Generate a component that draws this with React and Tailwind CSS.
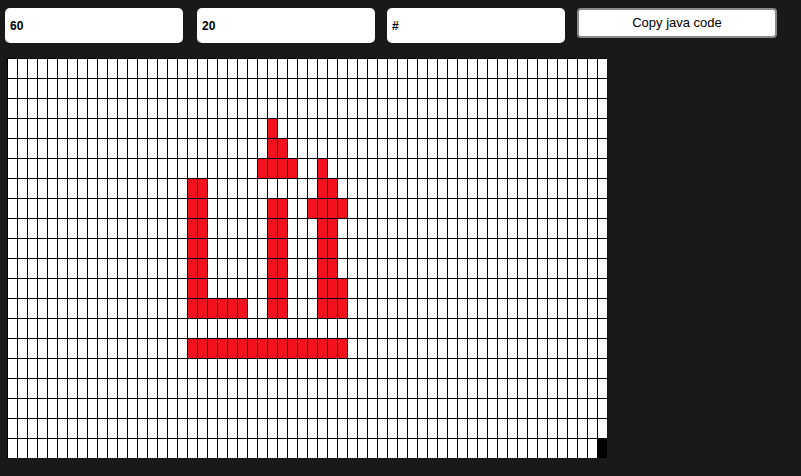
import React from 'react';

const COLS = 60;
const ROWS = 20;

// red cells by row -> columns
const RED = {
  3: [26],
  4: [26, 27],
  5: [25, 26, 27, 28, 31],
  6: [18, 19, 31, 32],
  7: [18, 19, 26, 27, 30, 31, 32, 33],
  8: [18, 19, 26, 27, 31, 32],
  9: [18, 19, 26, 27, 31, 32],
  10: [18, 19, 26, 27, 31, 32],
  11: [18, 19, 26, 27, 31, 32, 33],
  12: [18, 19, 20, 21, 22, 23, 26, 27, 31, 32, 33],
  14: [18, 19, 20, 21, 22, 23, 24, 25, 26, 27, 28, 29, 30, 31, 32, 33],
};

function cellClass(r, c) {
  if (r === ROWS - 1 && c === COLS - 1) return 'bg-black';
  if (RED[r] && RED[r].includes(c)) return 'bg-[#f3111d] border-l border-t border-black';
  return 'bg-white border-l border-t border-black';
}

export default function App() {
  const cells = [];
  for (let r = 0; r < ROWS; r++) {
    for (let c = 0; c < COLS; c++) {
      cells.push(<div key={`${r}-${c}`} className={`w-[10px] h-[20px] box-border ${cellClass(r, c)}`} />);
    }
  }

  return (
    <div className="min-h-[476px] bg-[#191919] pt-[8px] pl-[5px]" style={{ fontFamily: '"Liberation Sans", Arial, sans-serif' }}>
      <div className="flex items-start">
        <input defaultValue="60" className="w-[178px] h-[35px] rounded-[5px] bg-white px-[5px] text-[12px] font-bold text-black outline-none" />
        <input defaultValue="20" className="ml-[14px] w-[178px] h-[35px] rounded-[5px] bg-white px-[5px] text-[12px] font-bold text-black outline-none" />
        <input defaultValue="#" className="ml-[12px] w-[178px] h-[35px] rounded-[5px] bg-white px-[5px] text-[12px] font-bold text-black outline-none" />
        <button className="ml-[12px] w-[200px] h-[30px] rounded-[4px] border-2 border-[#8a8a8a] bg-white text-[13px] text-black">
          Copy java code
        </button>
      </div>
      <div className="mt-[15px] ml-[2px] grid grid-cols-[repeat(60,10px)] w-[600px]">
        {cells}
      </div>
    </div>
  );
}
